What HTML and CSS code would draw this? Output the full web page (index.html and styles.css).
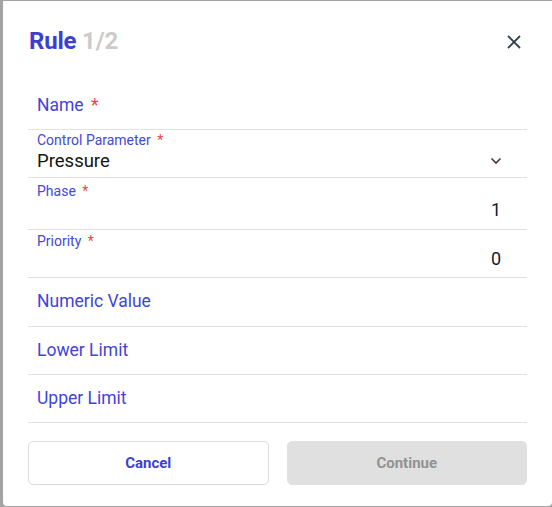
FILE: index.html
```html
<!DOCTYPE html>
<html>
<head>
<meta charset="utf-8">
<link rel="stylesheet" href="styles.css">
</head>
<body>
<div class="backdrop">
  <div class="modal">
    <div class="header">
      <h1 class="title">Rule <span class="step">1/2</span></h1>
      <button class="close" aria-label="Close">
        <svg width="16" height="16" viewBox="0 0 16 16"><path d="M2 2 L14 14 M14 2 L2 14" stroke="#37414f" stroke-width="1.8" fill="none"/></svg>
      </button>
    </div>
    <div class="fields">
      <div class="field simple"><span class="label-lg">Name <span class="req">*</span></span></div>
      <div class="field select">
        <span class="label-sm">Control Parameter <span class="req">*</span></span>
        <div class="value-row">
          <span class="value">Pressure</span>
          <svg class="chev" width="12" height="8" viewBox="0 0 12 8"><path d="M1.5 1.5 L6 6 L10.5 1.5" stroke="#4a3a35" stroke-width="1.6" fill="none"/></svg>
        </div>
      </div>
      <div class="field number tall">
        <span class="label-sm">Phase <span class="req">*</span></span>
        <span class="num">1</span>
      </div>
      <div class="field number">
        <span class="label-sm">Priority <span class="req">*</span></span>
        <span class="num">0</span>
      </div>
      <div class="field simple"><span class="label-lg">Numeric Value</span></div>
      <div class="field simple"><span class="label-lg">Lower Limit</span></div>
      <div class="field simple"><span class="label-lg">Upper Limit</span></div>
    </div>
    <div class="actions">
      <button class="btn cancel">Cancel</button>
      <button class="btn continue">Continue</button>
    </div>
  </div>
</div>
</body>
</html>
```

FILE: styles.css
```css
html, body {
  margin: 0;
  padding: 0;
  height: 100%;
  overflow: hidden;
}
body {
  background: #a3a3a3;
  font-family: Roboto, "Liberation Sans", sans-serif;
}
.backdrop {
  padding: 1px 0 0 3px;
}
.modal {
  background: #fff;
  width: 549px;
  height: 505px;
  border-radius: 0 0 4px 4px;
  box-sizing: border-box;
  padding: 0 25px 0 25px;
}
.header {
  display: flex;
  justify-content: space-between;
  align-items: center;
  height: 81px;
  padding-right: 2px;
}
.title {
  margin: 0;
  font-size: 24px;
  font-weight: 700;
  color: #3c3fd2;
  letter-spacing: -0.2px;
  margin-left: 1px;
  margin-top: -1px;
}
.step {
  color: #cbcbcb;
}
.close {
  border: 0;
  background: none;
  padding: 0;
  width: 16px;
  height: 16px;
  display: flex;
  margin-right: 3px;
  margin-top: 1px;
}
.fields {
  display: flex;
  flex-direction: column;
}
.field {
  border-bottom: 1px solid #e2e2e2;
  padding: 0 9px;
  box-sizing: border-box;
  display: flex;
  flex-direction: column;
}
.simple {
  height: 48px;
  justify-content: center;
  padding-bottom: 2px;
}
.fields .field:nth-child(5) { height: 49px; }
.label-lg {
  font-size: 17.5px;
  color: #3f45d8;
}
.label-sm {
  font-size: 14px;
  color: #4449d6;
  line-height: 15px;
}
.req {
  color: #ef4444;
  margin-left: 3px;
}
.select {
  height: 48px;
  padding-top: 3px;
}
.value-row {
  display: flex;
  justify-content: space-between;
  align-items: center;
  padding-right: 16px;
  margin-top: 2px;
}
.value {
  font-size: 18.5px;
  color: #141414;
  line-height: 22px;
}
.chev {
  margin-top: -1px;
}
.number {
  height: 48px;
  padding-top: 4px;
}
.tall {
  height: 52px;
  padding-top: 6px;
}
.num {
  align-self: flex-end;
  font-size: 18px;
  color: #111a33;
  line-height: 22px;
  margin-top: -1px;
  margin-right: 17px;
}
.tall .num {
  margin-top: 0px;
}
.actions {
  display: grid;
  grid-template-columns: 1fr 1fr;
  gap: 18px;
  margin-top: 18px;
}
.btn {
  height: 44px;
  border-radius: 5px;
  font-family: Roboto, "Liberation Sans", sans-serif;
  font-size: 15px;
  font-weight: 700;
}
.cancel {
  background: #fff;
  border: 1px solid #dcdcdc;
  color: #3c3fd2;
}
.continue {
  background: #e0e0e0;
  border: 1px solid #e0e0e0;
  color: #929292;
}
```
